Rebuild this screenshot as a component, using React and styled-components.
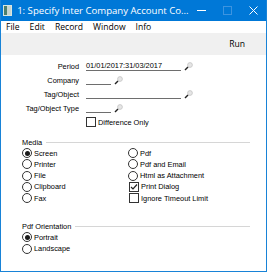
import { Fragment } from 'react'
import styled, { createGlobalStyle } from 'styled-components'

const GlobalStyle = createGlobalStyle`
  html, body {
    margin: 0;
    padding: 0;
    background: #fff;
  }
  body {
    font-family: 'Liberation Sans', Arial, sans-serif;
    color: #000;
  }
`

const Window = styled.div`
  width: 267px;
  height: 272px;
  box-sizing: border-box;
  border: 1px solid #1883d7;
  border-top: none;
  display: flex;
  flex-direction: column;
  background: #fff;
  overflow: hidden;
`

const TitleBar = styled.div`
  height: 21px;
  background: #0078d7;
  display: flex;
  align-items: center;
  color: #fff;
  padding-left: 3px;
  margin: 0 -1px;
`

const AppIcon = styled.div`
  width: 9px;
  height: 9px;
  border: 1px solid #d8e6e0;
  background: linear-gradient(90deg, #4d7f6c 0 45%, #c9d6d0 45% 100%);
`

const Title = styled.span`
  margin-left: 5px;
  font-family: 'Open Sans', 'Liberation Sans', sans-serif;
  font-size: 9.6px;
  white-space: nowrap;
  flex: 1;
`

const WinButton = styled.div`
  width: 33px;
  height: 21px;
  display: flex;
  align-items: center;
  justify-content: center;
`

const MenuBar = styled.div`
  flex: 0 0 10px;
  display: flex;
  align-items: center;
  gap: 10px;
  padding: 0 5px;
`

const MenuItem = styled.span`
  font-family: 'Open Sans', 'Liberation Sans', sans-serif;
  font-size: 8.6px;
`

const Toolbar = styled.div`
  height: 22px;
  background: #f0f0f0;
  display: flex;
  align-items: center;
  justify-content: flex-end;
  padding-right: 21px;
`

const RunButton = styled.span`
  font-family: 'Open Sans', 'Liberation Sans', sans-serif;
  font-size: 8.6px;
`

const Form = styled.div`
  flex: 1;
  padding: 4px 16px 0 0;
  font-size: 7.4px;
`

const FieldGrid = styled.div`
  display: grid;
  grid-template-columns: 78px 1fr;
  column-gap: 7px;
  grid-auto-rows: 14px;
  align-items: center;
`

const Label = styled.span`
  text-align: right;
  white-space: nowrap;
`

const FieldCell = styled.div`
  display: flex;
  align-items: center;
  gap: 3px;
`

const Input = styled.div`
  width: ${(p) => p.$width}px;
  height: 9px;
  border-bottom: 1px solid #6e6e6e;
  line-height: 9px;
  white-space: nowrap;
`

const Section = styled.div`
  margin-top: ${(p) => p.$top}px;
  padding-left: 21px;
`

const SectionHeader = styled.div`
  display: flex;
  align-items: center;
  gap: 4px;
  height: 12px;
`

const SectionLine = styled.div`
  flex: 1;
  height: 1px;
  background: #d6d6d6;
`

const OptionGrid = styled.div`
  display: grid;
  grid-template-columns: 106px 1fr;
  grid-auto-flow: column;
  grid-template-rows: repeat(${(p) => p.$rows}, 11.25px);
  margin-top: -0.5px;
`

const Option = styled.div`
  display: flex;
  align-items: center;
  white-space: nowrap;
  padding-left: ${(p) => p.$indent || 0}px;
`

const Radio = styled.span`
  width: 10px;
  height: 10px;
  box-sizing: border-box;
  border: 1px solid #333;
  border-radius: 50%;
  background: #fff;
  display: flex;
  align-items: center;
  justify-content: center;
  margin-right: 2px;

  &::after {
    content: '';
    width: 5px;
    height: 5px;
    border-radius: 50%;
    background: ${(p) => (p.$checked ? '#1a1a1a' : 'transparent')};
  }
`

const Box = styled.span`
  width: 10px;
  height: 10px;
  box-sizing: border-box;
  border: 1px solid #333;
  background: #fff;
  display: flex;
  align-items: center;
  justify-content: center;
  margin-right: 2px;
`

const PasteIcon = () => (
  <svg width="9" height="9" viewBox="0 0 9 9">
    <circle cx="6" cy="3" r="2.4" fill="#e6e6e6" stroke="#c4c4c4" strokeWidth="0.8" />
    <line x1="1" y1="8" x2="4" y2="5" stroke="#222" strokeWidth="1.5" />
  </svg>
)

const Check = ({ checked }) => (
  <Box>
    {checked && (
      <svg width="8" height="8" viewBox="0 0 8 8">
        <path d="M1 4 L3 6 L7 1.5" fill="none" stroke="#222" strokeWidth="1.2" />
      </svg>
    )}
  </Box>
)

const fields = [
  { label: 'Period', width: 95, value: '01/01/2017:31/03/2017' },
  { label: 'Company', width: 25 },
  { label: 'Tag/Object', width: 95 },
  { label: 'Tag/Object Type', width: 25 },
]

const menus = ['File', 'Edit', 'Record', 'Window', 'Info']
const mediaLeft = ['Screen', 'Printer', 'File', 'Clipboard', 'Fax']
const mediaRight = ['Pdf', 'Pdf and Email', 'Html as Attachment']

export default function App() {
  return (
    <>
      <GlobalStyle />
      <Window>
        <TitleBar>
          <AppIcon />
          <Title>1: Specify Inter Company Account Co...</Title>
          <WinButton>
            <svg width="9" height="9" viewBox="0 0 9 9">
              <line x1="0" y1="4.5" x2="9" y2="4.5" stroke="#fff" strokeWidth="1" />
            </svg>
          </WinButton>
          <WinButton>
            <svg width="9" height="9" viewBox="0 0 9 9">
              <rect x="0.5" y="0.5" width="8" height="8" fill="none" stroke="#3d94e0" strokeWidth="1" />
            </svg>
          </WinButton>
          <WinButton>
            <svg width="9" height="9" viewBox="0 0 9 9">
              <path d="M0.5 0.5 L8.5 8.5 M8.5 0.5 L0.5 8.5" stroke="#fff" strokeWidth="1" />
            </svg>
          </WinButton>
        </TitleBar>
        <MenuBar>
          {menus.map((m) => (
            <MenuItem key={m}>{m}</MenuItem>
          ))}
        </MenuBar>
        <Toolbar>
          <RunButton>Run</RunButton>
        </Toolbar>
        <Form>
          <FieldGrid>
            {fields.map((f) => (
              <Fragment key={f.label}>
                <Label>{f.label}</Label>
                <FieldCell>
                  <Input $width={f.width}>{f.value}</Input>
                  <PasteIcon />
                </FieldCell>
              </Fragment>
            ))}
            <span />
            <Option>
              <Check />
              Difference Only
            </Option>
          </FieldGrid>
          <Section $top={7}>
            <SectionHeader>
              Media
              <SectionLine />
            </SectionHeader>
            <OptionGrid $rows={5}>
              {mediaLeft.map((m, i) => (
                <Option key={m}>
                  <Radio $checked={i === 0} />
                  {m}
                </Option>
              ))}
              {mediaRight.map((m) => (
                <Option key={m}>
                  <Radio />
                  {m}
                </Option>
              ))}
              <Option $indent={1}>
                <Check checked />
                Print Dialog
              </Option>
              <Option $indent={1}>
                <Check />
                Ignore Timeout Limit
              </Option>
            </OptionGrid>
          </Section>
          <Section $top={16.5}>
            <SectionHeader>
              Pdf Orientation
              <SectionLine />
            </SectionHeader>
            <OptionGrid $rows={2}>
              <Option>
                <Radio $checked />
                Portrait
              </Option>
              <Option>
                <Radio />
                Landscape
              </Option>
            </OptionGrid>
          </Section>
        </Form>
      </Window>
    </>
  )
}
